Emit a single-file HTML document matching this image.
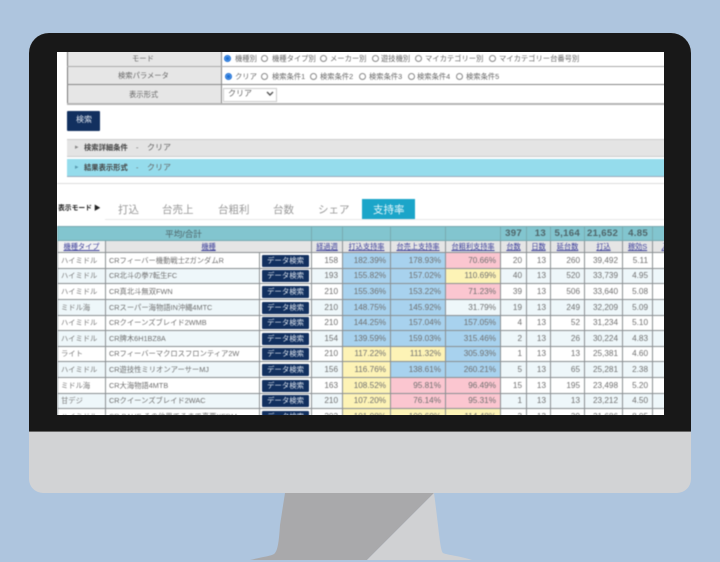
<!DOCTYPE html>
<html lang="ja"><head><meta charset="utf-8"><title>Monitor</title>
<style>
html,body{margin:0;padding:0;width:720px;height:562px;overflow:hidden;background:#aec5de}
body{position:relative;font-family:"Liberation Sans","Noto Sans CJK JP",sans-serif;color:#666}
.a{position:absolute}
#bezel{left:29px;top:33px;width:662px;height:460px;background:#d2d3d5;border-radius:20px 20px 14px 14px;overflow:hidden}
#black{left:0;top:0;width:662px;height:398px;background:#181818;border-bottom:1px solid #666}
#screen{left:57px;top:52px;width:607px;height:363px;background:#fff;overflow:hidden}
#in{left:-57px;top:-52px;width:720px;height:562px;filter:blur(.45px)}
.t{position:absolute;font-size:7.3px;line-height:10px;white-space:nowrap;color:#666}
.r{position:absolute;width:5px;height:5px;border:1px solid #888;border-radius:50%;background:#fff;margin:.5px}
.r.on{background:#1b6fd6;border-color:#1b6fd6;box-shadow:inset 0 0 0 .6px #8fbdf0}
.tab{position:absolute;top:203px;font-size:10.5px;line-height:14px;color:#999;white-space:nowrap}
table{position:absolute;left:57px;top:226px;width:620px;border-collapse:collapse;table-layout:fixed;font-size:8.2px;color:#707070}
td{border:1px solid #8a8f92;padding:0 4px 0 2px;line-height:10px;overflow:hidden;white-space:nowrap;text-align:right;box-sizing:border-box;background:#fff}
tr.h1 td{height:14px;background:#82c5cf;font-size:9.6px;letter-spacing:.3px;font-weight:bold;color:#4f6569;text-align:right;border-color:#78a9b0}
tr.h1 td.c{text-align:center;font-size:8.6px;font-weight:normal;letter-spacing:0}
tr.h2 td{height:12px;background:#e5e5e5;text-align:center;color:#3b3f9a;text-decoration:underline;font-size:7.2px;padding:0}
tr.h2 td:first-child{background:#f3f3f3}
tr.s td{height:15px}
tr.g td{height:16px}
tr.e td{background:#eef7fa}
td.l{text-align:left;padding-left:3px;font-size:7.3px;color:#7a7a7a}
td.n{text-align:left;padding-left:3px;font-size:7.3px}
td.b{padding:0 2px 0 2px;text-align:center;background:#fff!important}
td.b span{display:block;height:12px;line-height:12px;background:#12305f;color:#dfe6f0;font-size:7.4px;border-radius:1px}
tr td.B{background:#a8d2ee}
tr td.Y{background:#fdf3b6}
tr td.P{background:#fbc6d0}
</style></head><body>
<div class="a" id="bezel"><div class="a" id="black"></div></div>
<svg class="a" style="left:0;top:0" width="720" height="562" viewBox="0 0 720 562">
<path d="M285 493 L434 493 L367 560 L250 560 C262 557 271 556 274 554 C278 551 279 540 280 525 Z" fill="#a9a9ab"/>
<path d="M434 493 L367 560 L472 560 C460 556 447 555 443 553 C440 550 439 530 434 493 Z" fill="#d0d1d3"/>
</svg>
<div class="a" id="screen"><div class="a" id="in">
 <div class="a" style="left:67px;top:40px;width:153px;height:63px;background:#e6e6e6;border-left:1px solid #777;border-right:1px solid #888"></div>
 <div class="a" style="left:67px;top:66px;width:620px;height:1px;background:#aaa"></div>
 <div class="a" style="left:67px;top:84px;width:620px;height:1px;background:#888"></div>
 <div class="a" style="left:67px;top:103px;width:620px;height:2px;background:#b5b5b5"></div>
 <div class="t" style="left:132px;top:54px">モード</div>
 <div class="t" style="left:118px;top:71px">検索パラメータ</div>
 <div class="t" style="left:129px;top:90px">表示形式</div>

 <span class="r on" style="left:223px;top:54px"></span><div class="t" style="left:235px;top:54px">機種別</div>
 <span class="r" style="left:260px;top:54px"></span><div class="t" style="left:272px;top:54px">機種タイプ別</div>
 <span class="r" style="left:319px;top:54px"></span><div class="t" style="left:330px;top:54px">メーカー別</div>
 <span class="r" style="left:371px;top:54px"></span><div class="t" style="left:381px;top:54px">遊技機別</div>
 <span class="r" style="left:414px;top:54px"></span><div class="t" style="left:425px;top:54px">マイカテゴリー別</div>
 <span class="r" style="left:488px;top:54px"></span><div class="t" style="left:499px;top:54px">マイカテゴリー台番号別</div>

 <span class="r on" style="left:224px;top:72px"></span><div class="t" style="left:235px;top:72px">クリア</div>
 <span class="r" style="left:260px;top:72px"></span><div class="t" style="left:272px;top:72px">検索条件1</div>
 <span class="r" style="left:309px;top:72px"></span><div class="t" style="left:320px;top:72px">検索条件2</div>
 <span class="r" style="left:358px;top:72px"></span><div class="t" style="left:369px;top:72px">検索条件3</div>
 <span class="r" style="left:407px;top:72px"></span><div class="t" style="left:417px;top:72px">検索条件4</div>
 <span class="r" style="left:455px;top:72px"></span><div class="t" style="left:466px;top:72px">検索条件5</div>

 <div class="a" style="left:223px;top:88px;width:52px;height:12px;background:#fff;border:1px solid #ccc"></div>
 <div class="t" style="left:228px;top:89px;font-size:8px">クリア</div>
 <svg class="a" style="left:266px;top:91px" width="8" height="6"><path d="M1 1 L4 4 L7 1" fill="none" stroke="#555" stroke-width="1.4"/></svg>

 <div class="a" style="left:67px;top:111px;width:33px;height:20px;background:#12305f;border-radius:1px"></div>
 <div class="t" style="left:76px;top:115px;color:#dfe6f0;font-size:8px">検索</div>

 <div class="a" style="left:67px;top:139px;width:620px;height:18px;background:#e4e4e4;border-top:1px solid #ccc;border-bottom:1px solid #ccc;box-sizing:border-box"></div>
 <div class="a" style="left:67px;top:159px;width:620px;height:18px;background:#95dcec;border-bottom:1px solid #9ab;box-sizing:border-box"></div>
 <div class="a" style="left:57px;top:183px;width:620px;height:1px;background:#ddd"></div>
 <div class="t" style="left:75px;top:143px;font-size:7px;color:#888">▸</div>
 <div class="t" style="left:84px;top:143px;font-weight:bold;color:#444">検索詳細条件</div>
 <div class="t" style="left:136px;top:143px">-</div><div class="t" style="left:147px;top:143px;font-size:8px">クリア</div>
 <div class="t" style="left:75px;top:163px;font-size:7px;color:#5a9ab0">▸</div>
 <div class="t" style="left:84px;top:163px;font-weight:bold;color:#444">結果表示形式</div>
 <div class="t" style="left:136px;top:163px">-</div><div class="t" style="left:147px;top:163px;font-size:8px">クリア</div>

 <div class="t" style="left:58px;top:204px;font-weight:bold;font-size:6.8px;color:#222">表示モード ▶</div>
 <div class="a" style="left:105px;top:219px;width:570px;height:1px;background:#e8e8e8"></div>
 <div class="tab" style="left:118px">打込</div>
 <div class="tab" style="left:162px">台売上</div>
 <div class="tab" style="left:218px">台粗利</div>
 <div class="tab" style="left:273px">台数</div>
 <div class="tab" style="left:318px">シェア</div>
 <div class="a" style="left:362px;top:199px;width:53px;height:20px;background:#1ba5c9"></div>
 <div class="tab" style="left:373px;color:#e8f7fb">支持率</div>

 <table>
 <colgroup><col style="width:48px"><col style="width:154px"><col style="width:52px"><col style="width:31px"><col style="width:48px"><col style="width:55px"><col style="width:55px"><col style="width:26px"><col style="width:24px"><col style="width:34px"><col style="width:38px"><col style="width:30px"><col style="width:25px"></colgroup>
 <tr class="h1"><td colspan="3" class="c">平均/合計</td><td></td><td></td><td></td><td></td><td>397</td><td>13</td><td>5,164</td><td>21,652</td><td>4.85</td><td></td></tr>
 <tr class="h2"><td>機種タイプ</td><td colspan="2">機種</td><td>経過週</td><td>打込支持率</td><td>台売上支持率</td><td>台粗利支持率</td><td>台数</td><td>日数</td><td>延台数</td><td>打込</td><td>稼効S</td><td>入</td></tr>
 <tr class="g"><td class="l">ハイミドル</td><td class="n">CRフィーバー機動戦士ZガンダムR</td><td class="b"><span>データ検索</span></td><td>158</td><td class="B">182.39%</td><td class="B">178.93%</td><td class="P">70.66%</td><td>20</td><td>13</td><td>260</td><td>39,492</td><td>5.11</td><td></td></tr>
 <tr class="e s"><td class="l">ハイミドル</td><td class="n">CR北斗の拳7転生FC</td><td class="b"><span>データ検索</span></td><td>193</td><td class="B">155.82%</td><td class="B">157.02%</td><td class="Y">110.69%</td><td>40</td><td>13</td><td>520</td><td>33,739</td><td>4.95</td><td></td></tr>
 <tr class="g"><td class="l">ハイミドル</td><td class="n">CR真北斗無双FWN</td><td class="b"><span>データ検索</span></td><td>210</td><td class="B">155.36%</td><td class="B">153.22%</td><td class="P">71.23%</td><td>39</td><td>13</td><td>506</td><td>33,640</td><td>5.08</td><td></td></tr>
 <tr class="e g"><td class="l">ミドル海</td><td class="n">CRスーパー海物語IN沖縄4MTC</td><td class="b"><span>データ検索</span></td><td>210</td><td class="B">148.75%</td><td class="B">145.92%</td><td>31.79%</td><td>19</td><td>13</td><td>249</td><td>32,209</td><td>5.09</td><td></td></tr>
 <tr class="s"><td class="l">ハイミドル</td><td class="n">CRクイーンズブレイド2WMB</td><td class="b"><span>データ検索</span></td><td>210</td><td class="B">144.25%</td><td class="B">157.04%</td><td class="B">157.05%</td><td>4</td><td>13</td><td>52</td><td>31,234</td><td>5.10</td><td></td></tr>
 <tr class="e g"><td class="l">ハイミドル</td><td class="n">CR牌木6H1BZ8A</td><td class="b"><span>データ検索</span></td><td>154</td><td class="B">139.59%</td><td class="B">159.03%</td><td class="B">315.46%</td><td>2</td><td>13</td><td>26</td><td>30,224</td><td>4.83</td><td></td></tr>
 <tr class="s"><td class="l">ライト</td><td class="n">CRフィーバーマクロスフロンティア2W</td><td class="b"><span>データ検索</span></td><td>210</td><td class="Y">117.22%</td><td class="Y">111.32%</td><td class="B">305.93%</td><td>1</td><td>13</td><td>13</td><td>25,381</td><td>4.60</td><td></td></tr>
 <tr class="e g"><td class="l">ハイミドル</td><td class="n">CR遊技性ミリオンアーサーMJ</td><td class="b"><span>データ検索</span></td><td>156</td><td class="Y">116.76%</td><td class="B">138.61%</td><td class="B">260.21%</td><td>5</td><td>13</td><td>65</td><td>25,281</td><td>2.38</td><td></td></tr>
 <tr class="g"><td class="l">ミドル海</td><td class="n">CR大海物語4MTB</td><td class="b"><span>データ検索</span></td><td>163</td><td class="Y">108.52%</td><td class="P">95.81%</td><td class="P">96.49%</td><td>15</td><td>13</td><td>195</td><td>23,498</td><td>5.20</td><td></td></tr>
 <tr class="e s"><td class="l">甘デジ</td><td class="n">CRクイーンズブレイド2WAC</td><td class="b"><span>データ検索</span></td><td>210</td><td class="Y">107.20%</td><td class="P">76.14%</td><td class="P">95.31%</td><td>1</td><td>13</td><td>13</td><td>23,212</td><td>4.50</td><td></td></tr>
 <tr class="g"><td class="l">ハイミドル</td><td class="n">CR BAUE その他果てるまで真悪XFDM</td><td class="b"><span>データ検索</span></td><td>202</td><td class="Y">101.08%</td><td class="Y">100.60%</td><td class="Y">114.48%</td><td>3</td><td>13</td><td>39</td><td>21,686</td><td>8.05</td><td></td></tr>
 </table>
</div></div>
</body></html>
